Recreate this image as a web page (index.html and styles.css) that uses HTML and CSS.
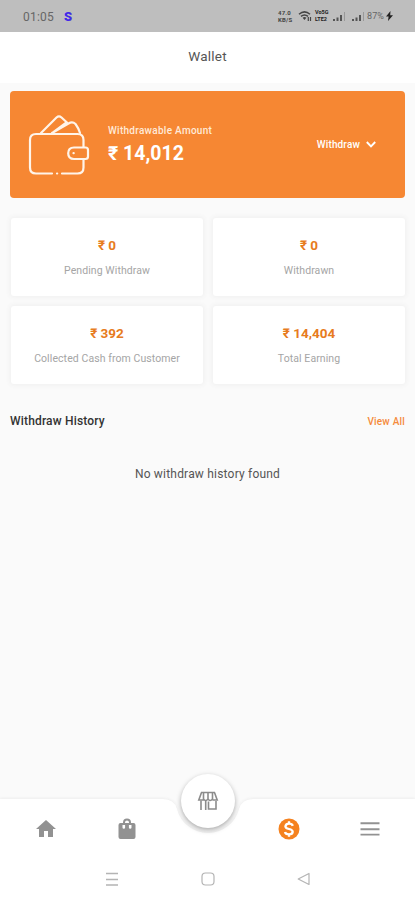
FILE: index.html
```html
<!DOCTYPE html>
<html lang="en">
<head>
<meta charset="utf-8">
<title>Wallet</title>
<link rel="stylesheet" href="styles.css">
</head>
<body>
<div class="screen">
  <div class="status">
    <span class="time">01:05</span>
    <span class="app-mark">S</span>
    <div class="indicators">
      <span class="tiny speed"><b>47.0</b><b>KB/S</b></span>
      <svg class="wifi" width="14" height="12" viewBox="0 0 14 12" fill="none" stroke="#444" stroke-width="1.5"><path d="M1 4.200Q6.500-.5 12 4.200M3 6.400Q6.500 3.500 10 6.400"/><path d="M4.600 7.700Q6.500 6.400 8.400 7.700L6.500 10z" fill="#444" stroke="none"/><path d="M10.300 7v4M12.500 7v4" stroke-width="1.200"/></svg>
      <span class="tiny volte"><b>Vo5G</b><b>LTE2</b></span>
      <svg class="signal" width="14" height="12" viewBox="0 0 14 12"><path d="M0 9h2v2H0zM3.500 7.500h2V11h-2zM7 5h2v6H7z" fill="#555"/><path d="M11 2h1v9h-1z" fill="#999"/></svg>
      <svg class="signal" width="14" height="12" viewBox="0 0 14 12"><path d="M0 9h2v2H0zM3.500 7.500h2V11h-2zM7 5h2v6H7z" fill="#555"/><path d="M11 2h1v9h-1z" fill="#999"/></svg>
      <span class="battery">87%</span>
      <svg width="7" height="10" viewBox="0 0 7 10"><path d="M4.500 0 0 5.600h2.600L2 10l5-5.800H4.200z" fill="#222"/></svg>
    </div>
  </div>
  <header class="title"><span>Wallet</span></header>
  <main>
    <section class="balance">
      <svg class="wallet" width="62" height="62" viewBox="0 0 62 62" fill="none" stroke="#fff4e9" stroke-width="2.200" stroke-linecap="round" stroke-linejoin="round">
        <path d="M24 58.500H8Q2 58.500 2 52.500V25q0-6 6-6h41.500q6 0 6 6v7M55.500 45v7.500q0 6-6 6H34M29 58.500h.2"/>
        <path d="M13 18 28.500 2.500Q31 .2 33.500 2.500L39 7.500M24 18 40.500 8.500Q44.500 6 47.500 9q3 4 4.500 9M25 17.500 38.500 7.500"/>
        <path d="M46 32.500h11.500q2.500 0 2.500 2.500v6.500q0 2.500-2.500 2.500H46q-5.800 0-5.800-5.700t5.800-5.800zM45.500 38.200h.2"/>
      </svg>
      <div class="amount">
        <span class="amount-label">Withdrawable Amount</span>
        <strong>₹ 14,012</strong>
      </div>
      <div class="withdraw"><span>Withdraw</span><svg width="10" height="7" viewBox="0 0 10 7" fill="none" stroke="#fff" stroke-width="1.900"><path d="m.8 1 4.200 4.300L9.200 1"/></svg></div>
    </section>
    <section class="stats">
      <div class="stat"><strong>₹ 0</strong><span>Pending Withdraw</span></div>
      <div class="stat"><strong>₹ 0</strong><span>Withdrawn</span></div>
      <div class="stat"><strong>₹ 392</strong><span>Collected Cash from Customer</span></div>
      <div class="stat"><strong>₹ 14,404</strong><span>Total Earning</span></div>
    </section>
    <div class="history"><h2>Withdraw History</h2><a>View All</a></div>
    <p class="empty"><span>No withdraw history found</span></p>
  </main>
  <footer>
    <svg class="nav-shape" width="415" height="101" viewBox="0 0 415 101"><path d="M0 0H163Q174 0 177 10A32 32 0 0 0 239 10Q242 0 253 0H415V101H0z" fill="#fff"/></svg>
    <nav class="tabs">
      <svg width="22" height="24" viewBox="1 0 22 24" fill="#929292"><path d="M10 20v-6h4v6h5v-8h3L12 3 2 12h3v8z"/></svg>
      <svg width="24" height="24" viewBox="0 0 24 24" fill="#929292"><path fill-rule="evenodd" d="M8 6V5.500a4 4 0 0 1 8 0V6h2.500q2 0 2 2v12q0 2-2 2h-13q-2 0-2-2V8q0-2 2-2zm2 0h4v-.5a2 2 0 0 0-4 0zM7.500 8v2.500a1.300 1.300 0 0 0 2.600 0V8zm6.400 0v2.500a1.300 1.300 0 0 0 2.600 0V8z"/></svg>
      <i></i>
      <svg width="24" height="24" viewBox="0 0 24 24"><circle cx="12" cy="12" r="10.500" fill="#f5821f"/><path d="M15.800 8.800Q15 6.700 12 6.700T8.400 9.200Q8.400 11.200 12 12T15.700 14.800Q15.500 17.300 12 17.300T8 14.900M12 4.300v2.500M12 17.200v2.500" fill="none" stroke="#fff" stroke-width="2.300"/></svg>
      <svg width="24" height="24" viewBox="0 0 24 24" stroke="#929292" stroke-width="1.900"><path d="M2.500 6.300h19M2.500 12.300h19M2.500 17.600h19"/></svg>
    </nav>
    <div class="system">
      <svg width="16" height="16" viewBox="0 0 16 16" stroke="#b4b4b4" stroke-width="1.300"><path d="M2 2.500h12M2 8.500h12M2 14h12"/></svg>
      <svg width="16" height="16" viewBox="0 0 16 16" fill="none" stroke="#b4b4b4" stroke-width="1.200"><rect x="2" y="2" width="12" height="12" rx="3.500"/></svg>
      <svg width="16" height="16" viewBox="0 0 16 16" fill="none" stroke="#b4b4b4" stroke-width="1.200" stroke-linejoin="round"><path d="M13 2.500v11L2.200 8z"/></svg>
    </div>
    <div class="fab"><svg width="22" height="20" viewBox="0 0 22 20" fill="none" stroke="#8c8c8c" stroke-width="1.600"><path d="M4 1.500h14M4.500 1.500 1.800 9h4.700V1.500M6.500 8q2.200 3 4.500 0V1.500M11 8q2.200 3 4.500 0V1.500M15.500 9h4.700L17.500 1.500"/><path d="M4 9.500V19M8.700 9.500V19M11.500 10.500V18h7.500v-8"/></svg></div>
  </footer>
</div>
</body>
</html>
```
FILE: styles.css
```css
* { box-sizing: border-box; }
body { margin: 0; background: #fafafa; font-family: Roboto, "Noto Sans", sans-serif; }
svg { display: block; flex: none; }
.screen { width: 415px; height: 900px; display: flex; flex-direction: column; overflow: hidden; }
.status { height: 32px; background: #bebebe; display: flex; align-items: center; padding: 0 22px 0 23px; color: #666; }
.time { font-size: 12px; letter-spacing: .2px; padding-top: 1px; }
.app-mark { margin-left: 10px; color: #4128e8; font: 900 13px Roboto, sans-serif; }
.indicators { margin-left: auto; display: flex; align-items: center; }
.tiny { display: flex; flex-direction: column; font-size: 5.500px; line-height: 7px; color: #444; }
.speed { width: 20px; font-size: 6px; letter-spacing: .2px; }
.volte { width: 13px; margin-left: 3px; color: #222; }
.signal { margin-left: 5px; }
.battery { margin: 0 2px 0 1px; font-size: 9px; letter-spacing: .1px; }
.title { height: 51px; background: #fff; display: flex; justify-content: center; padding-top: 16px; font-size: 13.500px; line-height: 17px; color: #555; letter-spacing: .25px; }
main { flex: 1; padding: 8px 10px 0; }
.balance { height: 107px; border-radius: 4px; background: #f68733; color: #fff; display: flex; align-items: center; padding: 0 29px 0 18px; }
.wallet { margin-top: 2px; }
.amount { margin: 0 0 0 18px; display: flex; flex-direction: column; }
.amount-label { font-size: 10px; line-height: 14px; font-weight: 500; letter-spacing: .28px; color: #ffead8; }
.amount strong { margin-top: 4px; font-size: 19.500px; line-height: 24px; font-weight: 700; }
.withdraw { margin-left: auto; display: flex; align-items: center; gap: 6px; font-size: 10px; font-weight: 500; letter-spacing: .15px; }
.stats { margin: 20px 0 0 1px; display: grid; grid-template-columns: 192px 192px; grid-auto-rows: 78px; gap: 10px; }
.stat { background: #fff; border-radius: 3px; box-shadow: 0 0 5px 1px #efefef; display: flex; flex-direction: column; align-items: center; padding-top: 18px; }
.stat strong { color: #e77b20; font-size: 13.500px; line-height: 18px; font-weight: 700; }
.stat span { margin-top: 10px; font-size: 10.500px; line-height: 14px; color: #a5a5a5; letter-spacing: .08px; }
.history { margin-top: 28px; display: flex; justify-content: space-between; align-items: center; height: 18px; }
.history h2 { margin: 0; font-size: 12px; font-weight: 500; color: #333; letter-spacing: .17px; }
.history a { font-size: 10px; font-weight: 500; color: #f58a3b; letter-spacing: .2px; }
.empty { margin: 36px 0 0; text-align: center; font-size: 12px; line-height: 16px; color: #555; letter-spacing: .2px; }
footer { position: relative; height: 101px; flex: none; }
.nav-shape { position: absolute; left: 0; top: 0; filter: drop-shadow(0 -1px 1px #eee); }
.tabs { position: relative; height: 60px; display: grid; grid-template-columns: repeat(5, 81px); justify-content: center; justify-items: center; align-items: center; }
.system { position: relative; height: 40px; display: flex; justify-content: center; align-items: center; gap: 80px; }
.fab { position: absolute; left: 181px; top: -25px; width: 54px; height: 54px; border-radius: 50%; background: #fff; box-shadow: 0 2px 5px #aaa; display: flex; align-items: center; justify-content: center; }
```
